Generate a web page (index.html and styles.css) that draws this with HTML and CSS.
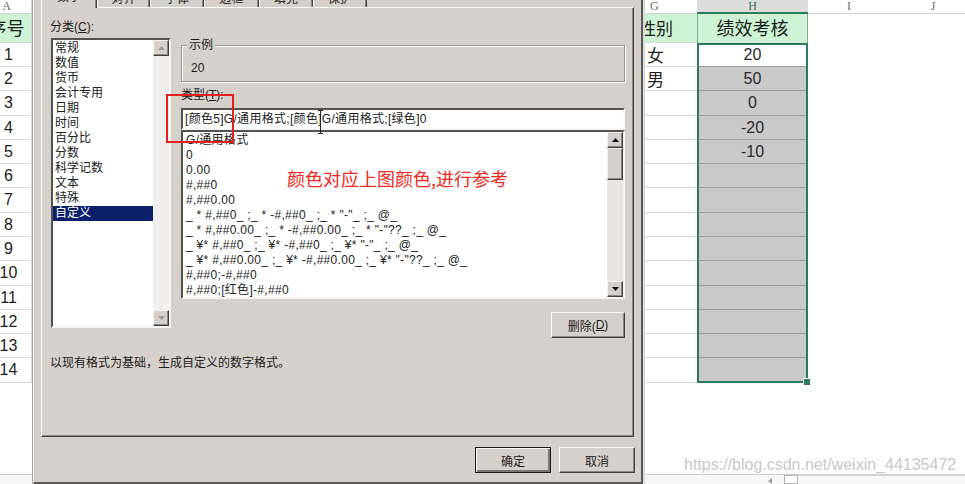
FILE: index.html
```html
<!DOCTYPE html>
<html lang="zh-CN">
<head>
<meta charset="utf-8">
<title>设置单元格格式</title>
<link rel="stylesheet" href="styles.css">
</head>
<body>
<div class="screen">
  <div class="sheet">
    <div class="row hdr">
      <div class="c a">A</div><div class="c gap"></div><div class="c g">G</div><div class="c h">H</div><div class="c i">I</div><div class="c j">J</div>
    </div>
    <div class="row title">
      <div class="c a green">序号</div><div class="c gap"></div><div class="c g green">性别</div><div class="c h green">绩效考核</div><div class="c i"></div><div class="c j"></div>
    </div>
    <div class="row data"><div class="c a">1</div><div class="c gap"></div><div class="c g">女</div><div class="c h plain">20</div><div class="c i"></div><div class="c j"></div></div>
    <div class="row data"><div class="c a">2</div><div class="c gap"></div><div class="c g">男</div><div class="c h">50</div><div class="c i"></div><div class="c j"></div></div>
    <div class="row data"><div class="c a">3</div><div class="c gap"></div><div class="c g"></div><div class="c h">0</div><div class="c i"></div><div class="c j"></div></div>
    <div class="row data"><div class="c a">4</div><div class="c gap"></div><div class="c g"></div><div class="c h">-20</div><div class="c i"></div><div class="c j"></div></div>
    <div class="row data"><div class="c a">5</div><div class="c gap"></div><div class="c g"></div><div class="c h">-10</div><div class="c i"></div><div class="c j"></div></div>
    <div class="row data"><div class="c a">6</div><div class="c gap"></div><div class="c g"></div><div class="c h"></div><div class="c i"></div><div class="c j"></div></div>
    <div class="row data"><div class="c a">7</div><div class="c gap"></div><div class="c g"></div><div class="c h"></div><div class="c i"></div><div class="c j"></div></div>
    <div class="row data"><div class="c a">8</div><div class="c gap"></div><div class="c g"></div><div class="c h"></div><div class="c i"></div><div class="c j"></div></div>
    <div class="row data"><div class="c a">9</div><div class="c gap"></div><div class="c g"></div><div class="c h"></div><div class="c i"></div><div class="c j"></div></div>
    <div class="row data"><div class="c a">10</div><div class="c gap"></div><div class="c g"></div><div class="c h"></div><div class="c i"></div><div class="c j"></div></div>
    <div class="row data"><div class="c a">11</div><div class="c gap"></div><div class="c g"></div><div class="c h"></div><div class="c i"></div><div class="c j"></div></div>
    <div class="row data"><div class="c a">12</div><div class="c gap"></div><div class="c g"></div><div class="c h"></div><div class="c i"></div><div class="c j"></div></div>
    <div class="row data"><div class="c a">13</div><div class="c gap"></div><div class="c g"></div><div class="c h"></div><div class="c i"></div><div class="c j"></div></div>
    <div class="row data"><div class="c a">14</div><div class="c gap"></div><div class="c g"></div><div class="c h"></div><div class="c i"></div><div class="c j"></div></div>
    <div class="blank"><span class="watermark">https://blog.csdn.net/weixin_44135472</span></div>
    <div class="bottombar"><span class="sbarrow"></span><span class="sbox"></span><span class="sline"></span></div>
  </div>

  <div class="selection"></div>

  <div class="dialog">
    <div class="tabs">
      <div class="tab active">数字</div><div class="tab">对齐</div><div class="tab">字体</div><div class="tab">边框</div><div class="tab">填充</div><div class="tab">保护</div>
    </div>
    <div class="panel">
      <div class="cols">
        <div class="left">
          <div class="label">分类(<u>C</u>):</div>
          <div class="listbox cat">
            <div class="items">
              <div class="it">常规</div>
              <div class="it">数值</div>
              <div class="it">货币</div>
              <div class="it">会计专用</div>
              <div class="it">日期</div>
              <div class="it">时间</div>
              <div class="it">百分比</div>
              <div class="it">分数</div>
              <div class="it">科学记数</div>
              <div class="it">文本</div>
              <div class="it">特殊</div>
              <div class="it sel">自定义</div>
            </div>
            <div class="vscroll off">
              <div class="sbtn"><svg width="7" height="4" viewBox="0 0 7 4"><polygon points="3.5,0 7,4 0,4"/></svg></div>
              <div class="track"></div>
              <div class="sbtn"><svg width="7" height="4" viewBox="0 0 7 4"><polygon points="0,0 7,0 3.5,4"/></svg></div>
            </div>
          </div>
        </div>
        <div class="right">
          <div class="group"><span class="legend">示例</span><div class="sample">20</div></div>
          <div class="label type-label">类型(<u>T</u>):</div>
          <div class="input">[颜色5]G/通用格式;[颜色]G/通用格式;[绿色]0</div>
          <div class="listbox fmt">
            <div class="items">
              <div class="it">G/通用格式</div>
              <div class="it">0</div>
              <div class="it">0.00</div>
              <div class="it">#,##0</div>
              <div class="it">#,##0.00</div>
              <div class="it">_ * #,##0_ ;_ * -#,##0_ ;_ * "-"_ ;_ @_</div>
              <div class="it">_ * #,##0.00_ ;_ * -#,##0.00_ ;_ * "-"??_ ;_ @_</div>
              <div class="it">_ ¥* #,##0_ ;_ ¥* -#,##0_ ;_ ¥* "-"_ ;_ @_</div>
              <div class="it">_ ¥* #,##0.00_ ;_ ¥* -#,##0.00_ ;_ ¥* "-"??_ ;_ @_</div>
              <div class="it">#,##0;-#,##0</div>
              <div class="it">#,##0;[红色]-#,##0</div>
            </div>
            <div class="vscroll">
              <div class="sbtn"><svg width="7" height="4" viewBox="0 0 7 4"><polygon points="3.5,0 7,4 0,4"/></svg></div>
              <div class="thumb"></div>
              <div class="track"></div>
              <div class="sbtn"><svg width="7" height="4" viewBox="0 0 7 4"><polygon points="0,0 7,0 3.5,4"/></svg></div>
            </div>
          </div>
          <div class="btnrow"><div class="btn del">删除(<u>D</u>)</div></div>
        </div>
      </div>
      <div class="desc">以现有格式为基础，生成自定义的数字格式。</div>
    </div>
    <div class="footer"><div class="btn default">确定</div><div class="btn">取消</div></div>

    <div class="redbox"></div>
    <div class="note">颜色对应上图颜色,进行参考</div>
    <svg class="ibeam" width="7" height="24" viewBox="0 0 7 24"><path d="M1 0.5h5M3.5 0.5v23M1 23.5h5" stroke="#222" stroke-width="1" fill="none"/></svg>
  </div>
</div>
</body>
</html>
```

FILE: styles.css
```css
* { box-sizing: border-box; }
html, body { margin: 0; padding: 0; }
body {
  width: 965px;
  height: 484px;
  overflow: hidden;
  background: #fff;
  font-family: "Liberation Sans", "Noto Sans CJK SC", sans-serif;
}
.screen { position: relative; width: 965px; height: 484px; overflow: hidden; }

/* ---------- spreadsheet ---------- */
.sheet {
  display: flex;
  flex-direction: column;
  width: 994px;
  height: 484px;
  margin-left: -18px;
}
.row { display: grid; grid-template-columns: 50px 600px 65px 111px 82px 86px; }
.c { white-space: nowrap; overflow: hidden; }

.hdr { height: 14px; }
.hdr .c {
  border-bottom: 1px solid #d0d0d0;
  font-family: "Liberation Serif", serif;
  font-size: 12px;
  line-height: 13px;
  color: #6a6a6a;
  text-align: center;
  overflow: visible;
}
.hdr .a { border-right: 1px solid #d6d6d6; }
.hdr .g { text-align: left; padding-left: 18px; }
.hdr .h { background: #dcdcdc; border-bottom: 2px solid #2f7a5c; color: #3d6b56; line-height: 12px; }

.title { height: 28.7px; }
.title .c {
  font-family: "Noto Sans CJK SC", sans-serif;
  font-size: 18px;
  line-height: 27px;
  color: #1e1e1e;
}
.green { background: #cdf3d5; }
.title .a { text-align: center; border-bottom: 1px solid #d6d6d6; border-right: 1px solid #d6d6d6; }
.title .g { padding-left: 7px; font-size: 17px; border-bottom: 1px solid #d6d6d6; }
.title .h { text-align: center; border-left: 1px solid #7aae97; border-right: 1px solid #7aae97; }

.data { height: 24.29px; }
.data .c { font-size: 16px; line-height: 24px; color: #222; }
.data .a { text-align: center; padding-left: 4px; border-bottom: 1px solid #dadada; border-right: 1px solid #dadada; }
.data .g {
  padding-left: 15px;
  font-family: "Noto Sans CJK SC", sans-serif;
  font-size: 17px;
  border-bottom: 1px solid #dadada;
}
.data .h { background: #c9c9c9; border-bottom: 1px solid #9c9c9c; text-align: center; color: #2a2a2a; }
.data .h.plain { background: #fff; }

.blank {
  flex: 1;
  display: flex;
  align-items: flex-end;
  padding-left: 702px;
}
.watermark {
  font-family: "Liberation Sans", sans-serif;
  font-size: 16px;
  line-height: 18px;
  color: #c9c9c9;
  white-space: nowrap;
}
.bottombar {
  height: 10px;
  border-top: 1px solid #cdcdcd;
  background: #f7f7f7;
  display: flex;
  align-items: flex-start;
  padding-left: 786px;
}
.sbarrow { width: 0; height: 0; margin-top: 3px; border-right: 4px solid #9a9a9a; border-top: 3px solid transparent; border-bottom: 3px solid transparent; }
.sbox { width: 14px; height: 9px; margin-left: 12px; border: 1px solid #b4b4b4; background: #fff; }
.sline { flex: 1; height: 9px; border-top: 1px solid #d6d6d6; }

.selection {
  position: absolute;
  left: 697px;
  top: 42.7px;
  width: 111px;
  height: 340px;
  border: 2px solid #2f7a5c;
}
.selection::after {
  content: "";
  position: absolute;
  right: -5px;
  bottom: -5px;
  width: 6px;
  height: 6px;
  background: #2f7a5c;
  border: 1px solid #fff;
}

/* ---------- dialog ---------- */
.dialog {
  position: absolute;
  left: 33px;
  top: -14px;
  width: 610px;
  height: 498px;
  background: #d5d0cc;
  border-left: 1px solid #f2f0ee;
  border-right: 2px solid #5c5a58;
  border-bottom: 2px solid #5c5a58;
  box-shadow: -1px 0 0 #aeaaa6, 2px 0 0 #dedcda;
  font-size: 12px;
  color: #1c1c1c;
  display: flex;
  flex-direction: column;
}
.tabs {
  display: flex;
  align-items: flex-end;
  height: 21px;
  padding-left: 7px;
}
.tab {
  width: 54px;
  height: 19px;
  border-top: 1px solid #fff;
  border-left: 1px solid #fff;
  border-right: 1px solid #404040;
  box-shadow: inset -1px 0 0 #8a8682;
  text-align: center;
  line-height: 17px;
  font-family: "Noto Sans CJK SC", sans-serif;
}
.tab.active {
  width: 56px;
  height: 22px;
  margin-bottom: -1px;
  position: relative;
  z-index: 1;
  background: #d5d0cc;
}
.tab:nth-child(2) { width: 53px; }
.tab:nth-child(4) { width: 55px; }

.panel {
  margin-left: 7px;
  width: 593px;
  height: 430px;
  border: 1px solid;
  border-color: #fff #404040 #404040 #fff;
  box-shadow: inset -1px -1px 0 #8a8682;
  padding: 12px 0 0 8px;
}
.cols { display: grid; grid-template-columns: 121px 444px; column-gap: 10px; }
.label { height: 14px; line-height: 14px; white-space: nowrap; }
.label u, .btn u { text-decoration: underline; }

.listbox {
  display: flex;
  background: #fff;
  border: 2px solid;
  border-color: #525252 #f6f6f6 #f6f6f6 #525252;
}
.cat { margin: 4px 0 0 1px; width: 120px; height: 290px; }
.items {
  flex: 1;
  padding-top: 1px;
  line-height: 15px;
  overflow: hidden;
  white-space: nowrap;
  color: #222;
}
.cat .it { padding-left: 2px; }
.fmt .it { padding-left: 3px; letter-spacing: 0.3px; }
.it.sel { background: #0b1f6b; color: #fff; }

.vscroll { width: 16px; display: flex; flex-direction: column; background: #f1efed; }
.fmt .vscroll { background: #e8e5e2; }
.sbtn, .thumb {
  background: #d5d0cc;
  border: 1px solid;
  border-color: #f4f2f0 #404040 #404040 #f4f2f0;
  box-shadow: inset -1px -1px 0 #8a8682;
}
.sbtn { height: 16px; display: flex; align-items: center; justify-content: center; }
.sbtn svg { fill: #111; }
.off .sbtn svg { fill: #9c9894; }
.thumb { height: 32px; }
.track { flex: 1; }

.group {
  position: relative;
  margin-top: 25px;
  height: 37px;
  border: 1px solid #9b9793;
  box-shadow: inset 1px 1px 0 #fbfaf9, 1px 1px 0 #fbfaf9;
  padding: 15px 0 0 9px;
}
.legend {
  position: absolute;
  top: -8px;
  left: 5px;
  padding: 0 2px;
  line-height: 14px;
  background: #d5d0cc;
}
.sample { line-height: 14px; }
.type-label { margin-top: 6px; }
.input {
  margin-top: 6px;
  height: 22px;
  border: 2px solid;
  border-color: #525252 #f6f6f6 #f6f6f6 #525252;
  background: #fff;
  padding-left: 2px;
  line-height: 18px;
  white-space: nowrap;
  letter-spacing: 0.3px;
  color: #222;
}
.fmt { height: 169px; }
.btnrow { display: flex; justify-content: flex-end; margin-top: 13px; }

.btn {
  width: 76px;
  height: 26px;
  display: flex;
  align-items: center;
  justify-content: center;
  border: 1px solid;
  border-color: #fff #404040 #404040 #fff;
  box-shadow: inset -1px -1px 0 #8a8682;
  background: #d5d0cc;
  white-space: nowrap;
}
.btn.del { width: 74px; }
.btn.default {
  border: 1px solid #1a1a1a;
  box-shadow: inset 1px 1px 0 #fff, inset -2px -2px 0 #7a7672;
}
.desc { margin-top: 18px; line-height: 14px; white-space: nowrap; }
.footer { display: flex; justify-content: flex-end; gap: 8px; margin-top: 10px; padding-right: 6px; }

.redbox {
  position: absolute;
  left: 132px;
  top: 108px;
  width: 68px;
  height: 49px;
  border: 2px solid #e3201c;
}
.note {
  position: absolute;
  left: 253px;
  top: 182px;
  font-family: "Noto Sans CJK SC", sans-serif;
  font-size: 18px;
  line-height: 20px;
  color: #ee2a22;
  white-space: nowrap;
}
.ibeam { position: absolute; left: 283px; top: 124px; }
```
